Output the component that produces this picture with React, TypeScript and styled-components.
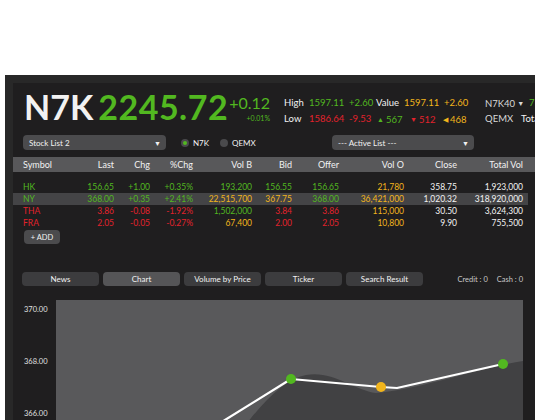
import { FC, ReactElement } from 'react'
import styled, { createGlobalStyle } from 'styled-components'

const GREEN = '#52b820'
const RED = '#e3222c'
const YELLOW = '#f2b51c'
const WHITE = '#f2f2f2'

type Tone = 'g' | 'r' | 'y' | 'w'
const toneColor = (t: Tone): string =>
  t === 'g' ? GREEN : t === 'r' ? RED : t === 'y' ? YELLOW : WHITE

const COLS = '40px 51px 36px 43px 59px 40px 47px 65px 53px 66px'

const headers = ['Symbol', 'Last', 'Chg', '%Chg', 'Vol B', 'Bid', 'Offer', 'Vol O', 'Close', 'Total Vol']

type Cell = [string, Tone]
const rows: { cells: Cell[]; active?: boolean }[] = [
  {
    cells: [['HK', 'g'], ['156.65', 'g'], ['+1.00', 'g'], ['+0.35%', 'g'], ['193,200', 'g'], ['156.55', 'g'], ['156.65', 'g'], ['21,780', 'y'], ['358.75', 'w'], ['1,923,000', 'w']]
  },
  {
    active: true,
    cells: [['NY', 'g'], ['368.00', 'g'], ['+0.35', 'g'], ['+2.41%', 'g'], ['22,515,700', 'y'], ['367.75', 'y'], ['368.00', 'g'], ['36,421,000', 'y'], ['1,020.32', 'w'], ['318,920,000', 'w']]
  },
  {
    cells: [['THA', 'r'], ['3.86', 'r'], ['-0.08', 'r'], ['-1.92%', 'r'], ['1,502,000', 'g'], ['3.84', 'r'], ['3.86', 'r'], ['115,000', 'y'], ['30.50', 'w'], ['3,624,300', 'w']]
  },
  {
    cells: [['FRA', 'r'], ['2.05', 'r'], ['-0.05', 'r'], ['-0.27%', 'r'], ['67,400', 'y'], ['2.00', 'r'], ['2.05', 'r'], ['10,800', 'y'], ['9.90', 'w'], ['755,500', 'w']]
  }
]

const tabs = ['News', 'Chart', 'Volume by Price', 'Ticker', 'Search Result']

const App: FC = (): ReactElement => {
  return (
    <Page>
      <GlobalStyle />
      <Frame>
        <Inner>
          <Header>
            <Ticker>N7K</Ticker>
            <Price>2245.72</Price>
            <ChangeBox>
              <Change>+0.12</Change>
              <ChangePct>+0.01%</ChangePct>
            </ChangeBox>
            <Stats>
              <StatRow>
                <Stat $w={25}>High</Stat>
                <Stat $w={40} $tone='g'>1597.11</Stat>
                <Stat $w={27} $tone='g'>+2.60</Stat>
                <Stat $w={28}>Value</Stat>
                <Stat $w={40} $tone='y'>1597.11</Stat>
                <Stat $tone='y'>+2.60</Stat>
              </StatRow>
              <StatRow>
                <Stat $w={25}>Low</Stat>
                <Stat $w={40} $tone='r'>1586.64</Stat>
                <Stat $w={28} $tone='r'>-9.53</Stat>
                <Stat $w={33} $tone='g'><Tri>▲</Tri>567</Stat>
                <Stat $w={33} $tone='r'><Tri>▼</Tri>512</Stat>
                <Stat $tone='y'><Tri>◀</Tri>468</Stat>
              </StatRow>
            </Stats>
            <IndexBox>
              <StatRow>
                <IndexName $w={44}>N7K40<Caret>▼</Caret></IndexName>
                <Stat $tone='g'>7</Stat>
              </StatRow>
              <StatRow>
                <IndexName $w={36}>QEMX</IndexName>
                <Stat>Tota</Stat>
              </StatRow>
            </IndexBox>
          </Header>

          <Controls>
            <Select $w={143}>Stock List 2<Caret>▼</Caret></Select>
            <RadioGroup>
              <Radio><Dot $on />N7K</Radio>
              <Radio><Dot />QEMX</Radio>
            </RadioGroup>
            <Select $w={142}>--- Active List ---<Caret>▼</Caret></Select>
          </Controls>

          <TableHead>
            {headers.map((h, i) => (
              <HeadCell key={h} $left={i === 0}>{h}</HeadCell>
            ))}
          </TableHead>
          <TableBody>
            {rows.map((r) => (
              <Row key={r.cells[0][0]} $active={r.active}>
                {r.cells.map(([v, t], i) => (
                  <Td key={i} $tone={t} $left={i === 0}>{v}</Td>
                ))}
              </Row>
            ))}
          </TableBody>
          <AddButton>+ ADD</AddButton>

          <TabBar>
            {tabs.map((t) => (
              <Tab key={t} $active={t === 'Chart'}>{t}</Tab>
            ))}
            <Balance>
              <span>Credit : 0</span>
              <span>Cash : 0</span>
            </Balance>
          </TabBar>

          <ChartArea>
            <YAxis>
              <YLabel>370.00</YLabel>
              <YLabel>368.00</YLabel>
              <YLabel>366.00</YLabel>
            </YAxis>
            <Plot>
              <svg width='100%' height='140' viewBox='0 0 467 140' preserveAspectRatio='none'>
                <path
                  d='M178,140 C205,104 226,80 250,75 C276,70 298,90 320,93 C360,90 420,69 467,61 L467,140 Z'
                  fill='#414143'
                />
                <polyline
                  points='124,148 169,120 235,79 325,87 341,88 447,64'
                  fill='none'
                  stroke='#fff'
                  strokeWidth='2.2'
                  strokeLinejoin='round'
                />
                <circle cx='235' cy='79' r='5' fill={GREEN} />
                <circle cx='325' cy='87' r='5' fill={YELLOW} />
                <circle cx='447' cy='64' r='5' fill={GREEN} />
              </svg>
            </Plot>
          </ChartArea>
        </Inner>
      </Frame>
    </Page>
  )
}

const GlobalStyle = createGlobalStyle`
  html, body {
    margin: 0;
    background: #fff;
    overflow: hidden;
  }
  body {
    font-family: Lato, 'Open Sans', sans-serif;
  }
`
const Page = styled.div`
  width: 535px;
  height: 420px;
  padding: 75px 0 0 5px;
  box-sizing: border-box;
  overflow: hidden;
`
const Frame = styled.div`
  background: #282828;
  padding: 8px 0 0 8px;
  height: 345px;
  box-sizing: border-box;
`
const Inner = styled.div`
  background: #1f1e1f;
  width: 522px;
  height: 100%;
  color: ${WHITE};
`
const Header = styled.div`
  display: flex;
  align-items: flex-start;
  padding: 7px 0 0 11px;
  height: 34px;
  white-space: nowrap;
`
const Ticker = styled.div`
  font-size: 34px;
  line-height: 34px;
  font-weight: 700;
  color: ${WHITE};
`
const Price = styled(Ticker)`
  color: ${GREEN};
  margin-left: 5px;
  letter-spacing: 0.5px;
`
const ChangeBox = styled.div`
  display: flex;
  flex-direction: column;
  align-items: flex-end;
  margin: 5px 0 0 1px;
  color: ${GREEN};
`
const Change = styled.div`
  font-size: 16px;
  line-height: 16px;
`
const ChangePct = styled.div`
  font-size: 7px;
  line-height: 10px;
  margin-top: 2px;
`
const Stats = styled.div`
  flex: none;
  width: 201px;
  margin: 5px 0 0 14px;
  font-size: 9.5px;
`
const StatRow = styled.div`
  display: flex;
  height: 16px;
  line-height: 16px;
`
const Stat = styled.span<{ $tone?: Tone; $w?: number }>`
  flex: none;
  width: ${(p) => (p.$w ? `${p.$w}px` : 'auto')};
  color: ${(p) => (p.$tone ? toneColor(p.$tone) : WHITE)};
`
const Tri = styled.span`
  font-size: 7px;
  margin-right: 2px;
  vertical-align: 1px;
`
const IndexBox = styled.div`
  margin-top: 5px;
  font-size: 9.5px;
  color: #d8d8d8;
`
const IndexName = styled.span<{ $w: number }>`
  flex: none;
  width: ${(p) => p.$w}px;
`
const Caret = styled.span`
  font-size: 7px;
  margin-left: 2px;
  vertical-align: 1px;
`
const Controls = styled.div`
  display: flex;
  align-items: center;
  margin-top: 11px;
  padding-left: 10px;
  height: 15px;
`
const Select = styled.div<{ $w: number }>`
  display: flex;
  justify-content: space-between;
  align-items: center;
  width: ${(p) => p.$w}px;
  height: 15px;
  box-sizing: border-box;
  padding: 0 5px 0 6px;
  background: #4b4b4d;
  border-radius: 4px;
  font-size: 8px;
  color: ${WHITE};
`
const RadioGroup = styled.div`
  display: flex;
  align-items: center;
  gap: 11px;
  width: 136px;
  margin: 0 15px;
`
const Radio = styled.div`
  display: flex;
  align-items: center;
  gap: 4px;
  font-size: 8px;
`
const Dot = styled.span<{ $on?: boolean }>`
  width: 8px;
  height: 8px;
  border-radius: 50%;
  background: #4a4a4c;
  display: flex;
  align-items: center;
  justify-content: center;

  &::after {
    content: '';
    display: ${(p) => (p.$on ? 'block' : 'none')};
    width: 4px;
    height: 4px;
    border-radius: 50%;
    background: ${GREEN};
  }
`
const TableHead = styled.div`
  display: grid;
  grid-template-columns: ${COLS};
  margin-top: 7px;
  padding: 0 12px 0 10px;
  height: 15px;
  align-items: center;
  background: #58585a;
  font-size: 9px;
`
const HeadCell = styled.div<{ $left?: boolean }>`
  text-align: ${(p) => (p.$left ? 'left' : 'right')};
  color: ${WHITE};
`
const TableBody = styled.div`
  margin-top: 9px;
`
const Row = styled.div<{ $active?: boolean }>`
  display: grid;
  grid-template-columns: ${COLS};
  margin-right: 7px;
  padding: 0 5px 0 10px;
  height: 12px;
  line-height: 12px;
  background: ${(p) => (p.$active ? '#444446' : 'transparent')};
  font-size: 8.5px;
`
const Td = styled.div<{ $tone: Tone; $left?: boolean }>`
  text-align: ${(p) => (p.$left ? 'left' : 'right')};
  color: ${(p) => toneColor(p.$tone)};
`
const AddButton = styled.div`
  display: flex;
  align-items: center;
  justify-content: center;
  width: 36px;
  height: 14px;
  margin: 1px 0 0 11px;
  background: #4b4b4d;
  border-radius: 4px;
  font-size: 7.5px;
  color: ${WHITE};
`
const TabBar = styled.div`
  display: flex;
  align-items: center;
  gap: 4px;
  margin-top: 28px;
  padding: 0 12px 0 9px;
  height: 14px;
`
const Tab = styled.div<{ $active?: boolean }>`
  width: 77px;
  height: 14px;
  display: flex;
  align-items: center;
  justify-content: center;
  border-radius: 4px;
  background: ${(p) => (p.$active ? '#555557' : '#3c3c3e')};
  font-size: 8px;
  color: ${WHITE};
`
const Balance = styled.div`
  margin-left: auto;
  display: flex;
  gap: 9px;
  font-size: 7.5px;
  color: #c8c8c8;
`
const ChartArea = styled.div`
  display: flex;
  margin-top: 14px;
  padding-right: 12px;
  height: 140px;
`
const YAxis = styled.div`
  width: 43px;
  box-sizing: border-box;
  padding: 5px 0 0 11px;
  display: flex;
  flex-direction: column;
  gap: 42px;
`
const YLabel = styled.div`
  height: 10px;
  line-height: 10px;
  font-size: 7.5px;
  color: #e0e0e0;
`
const Plot = styled.div`
  flex: 1;
  background: #59595b;
  height: 140px;
  overflow: hidden;
`

export default App
